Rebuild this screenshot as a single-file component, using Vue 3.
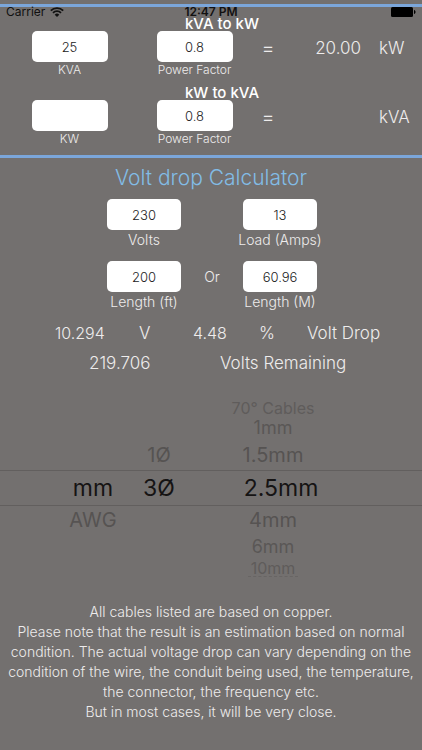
<script setup>

import {computed, ref} from "vue"

const kva = ref("25")
const kvaFactor = ref("0.8")
const kw = ref("")
const kwFactor = ref("0.8")

const volts = ref("230")
const load = ref("13")
const feet = ref("200")
const metres = ref("60.96")

// Rows of the picker wheel, row 4 is the selected one
const units = ref([
    {label: "mm", row: 4},
    {label: "AWG", row: 5},
])
const phases = ref([
    {label: "1Ø", row: 3},
    {label: "3Ø", row: 4},
])
const cables = ref([
    {label: "70° Cables", row: 1},
    {label: "1mm", row: 2},
    {label: "1.5mm", row: 3},
    {label: "2.5mm", row: 4},
    {label: "4mm", row: 5},
    {label: "6mm", row: 6},
    {label: "10mm", row: 7},
])

const millivolts = 12.99 // Drop per amp per metre for 2.5mm three phase

const kwResult = computed(() => kva.value ? (kva.value * kvaFactor.value).toFixed(2) : "")
const kvaResult = computed(() => kw.value ? (kw.value / kwFactor.value).toFixed(2) : "")
const drop = computed(() => load.value * metres.value * millivolts / 1000)
const percent = computed(() => drop.value / volts.value * 100)

const feetChanged = () => {
    metres.value = (feet.value * 0.3048).toFixed(2)
}

const metresChanged = () => {
    feet.value = (metres.value / 0.3048).toFixed(0)
}

</script>

<template>
    <div class="screen">
        <header class="status">
            <span class="carrier">
                Carrier
                <svg class="wifi" viewBox="0 0 14 10" aria-hidden="true">
                    <path d="M.8 3.600a8.800 8.800 0 0 1 12.400 0" />
                    <path d="M3 5.900a5.600 5.600 0 0 1 8 0" />
                    <path class="dot" d="M7 10L4.700 7.700a3.200 3.200 0 0 1 4.600 0z" />
                </svg>
            </span>
            <span class="clock">12:47 PM</span>
            <svg class="battery" viewBox="0 0 25 10" aria-hidden="true">
                <rect x="0" y="0" width="22" height="10" rx="1.500" />
                <path d="M23 3c2 .5 2 3.500 0 4z" />
            </svg>
        </header>

        <section class="power">
            <h2>kVA to kW</h2>
            <div class="powerRow">
                <div class="field">
                    <input id="kva" v-model="kva" inputmode="decimal">
                    <label for="kva">KVA</label>
                </div>
                <div class="field">
                    <input id="kvaFactor" v-model="kvaFactor" inputmode="decimal">
                    <label for="kvaFactor">Power Factor</label>
                </div>
                <span class="equals">=</span>
                <output class="result">{{ kwResult }}</output>
                <span class="unit">kW</span>
            </div>
            <h2>kW to kVA</h2>
            <div class="powerRow">
                <div class="field">
                    <input id="kw" v-model="kw" inputmode="decimal">
                    <label for="kw">KW</label>
                </div>
                <div class="field">
                    <input id="kwFactor" v-model="kwFactor" inputmode="decimal">
                    <label for="kwFactor">Power Factor</label>
                </div>
                <span class="equals">=</span>
                <output class="result">{{ kvaResult }}</output>
                <span class="unit">kVA</span>
            </div>
        </section>

        <section class="volt">
            <h1>Volt drop Calculator</h1>
            <div class="voltRow">
                <div class="field large">
                    <input id="volts" v-model="volts" inputmode="decimal">
                    <label for="volts">Volts</label>
                </div>
                <span></span>
                <div class="field large">
                    <input id="load" v-model="load" inputmode="decimal">
                    <label for="load">Load (Amps)</label>
                </div>
            </div>
            <div class="voltRow">
                <div class="field large">
                    <input id="feet" v-model="feet" inputmode="decimal" @input="feetChanged">
                    <label for="feet">Length (ft)</label>
                </div>
                <span class="or">Or</span>
                <div class="field large">
                    <input id="metres" v-model="metres" inputmode="decimal" @input="metresChanged">
                    <label for="metres">Length (M)</label>
                </div>
            </div>
            <div class="dropRow">
                <output>{{ drop.toFixed(3) }}</output>
                <span>V</span>
                <output>{{ percent.toFixed(2) }}</output>
                <span>%</span>
                <span>Volt Drop</span>
            </div>
            <div class="remainingRow">
                <output>{{ (volts - drop).toFixed(3) }}</output>
                <span>Volts Remaining</span>
            </div>
        </section>

        <section class="picker">
            <div class="band"></div>
            <button v-for="item in units" :key="item.label" type="button" :class="['item', 'unitItem', 'row' + item.row]">{{ item.label }}</button>
            <button v-for="item in phases" :key="item.label" type="button" :class="['item', 'phaseItem', 'row' + item.row]">{{ item.label }}</button>
            <button v-for="item in cables" :key="item.label" type="button" :class="['item', 'cableItem', 'row' + item.row]">{{ item.label }}</button>
            <div class="wheelEdge"></div>
        </section>

        <footer class="note">
            <p>All cables listed are based on copper.</p>
            <p>Please note that the result is an estimation based on normal condition. The actual voltage drop can vary depending on the condition of the wire, the conduit being used, the temperature, the connector, the frequency etc.</p>
            <p>But in most cases, it will be very close.</p>
        </footer>
    </div>
</template>

<style>

body {
    background: #73706f;
}

</style>

<style scoped>

.screen {
    display: flex;
    flex-direction: column;
    min-height: 100vh;
    box-sizing: border-box;
    padding-top: 4px;
    background: #73706f;
    color: #eeecec;
    font-family: Inter, "Liberation Sans", sans-serif;
    font-weight: 300;
}

h1, h2, p {
    margin: 0;
}

.status {
    display: grid;
    grid-template-columns: 1fr auto 1fr;
    align-items: center;
    height: 9px;
    padding: 0 6px;
    border-top: 3px solid #7ba6da;
    color: #111;
    font-size: 12px;
    font-weight: 400;
    line-height: 8px;
}

.carrier {
    display: flex;
    align-items: center;
    gap: 5px;
}

.wifi {
    width: 14px;
    height: 10px;
    fill: none;
    stroke: #111;
    stroke-width: 1.8;
}

.wifi .dot {
    fill: #111;
    stroke: none;
}

.clock {
    font-weight: 600;
}

.battery {
    justify-self: end;
    width: 25px;
    height: 10px;
    fill: #000;
}

.power {
    border-bottom: 3px solid #7ba6da;
    padding-bottom: 8px;
}

.power h2 {
    padding-left: 22px;
    color: #fff;
    font-size: 15px;
    font-weight: 500;
    line-height: 15px;
    text-align: center;
}

.powerRow {
    display: grid;
    grid-template-columns: 139fr 111fr 36fr 75fr 61fr;
}

.powerRow + h2 {
    margin-top: 7px;
}

.field {
    display: flex;
    flex-direction: column;
    align-items: center;
    white-space: nowrap;
}

.field input {
    box-sizing: border-box;
    width: 76px;
    height: 31px;
    padding: 0;
    border: 0;
    border-radius: 5px;
    background: #fff;
    color: #222;
    font: inherit;
    font-size: 13px;
    text-align: center;
}

.field label {
    font-size: 12px;
    line-height: 16px;
}

.field.large input {
    width: 74px;
}

.field.large label {
    font-size: 14px;
    line-height: 20px;
}

.equals, .result, .unit {
    font-size: 17px;
    line-height: 34px;
}

.equals {
    font-size: 20px;
    text-align: center;
}

.result {
    text-align: right;
}

.unit {
    padding-left: 18px;
}

.volt h1 {
    margin-top: 8px;
    color: #82bce6;
    font-size: 21px;
    font-weight: 300;
    line-height: 24px;
    text-align: center;
}

.voltRow {
    display: grid;
    grid-template-columns: 74px 62px 74px;
    justify-content: center;
    margin-top: 9px;
    padding-left: 2px;
}

.voltRow + .voltRow {
    margin-top: 11px;
}

.or {
    font-size: 14px;
    line-height: 32px;
    text-align: center;
}

.dropRow, .remainingRow {
    display: grid;
    font-size: 17px;
    line-height: 20px;
    white-space: nowrap;
}

.dropRow {
    grid-template-columns: 55fr 84fr 54fr 66fr 48fr 115fr;
    margin-top: 11px;
}

.dropRow output {
    font-size: 16px;
}

.remainingRow {
    grid-template-columns: 89fr 131fr 202fr;
    margin-top: 10px;
}

.dropRow output:first-child, .remainingRow output {
    grid-column: 2;
}

.picker {
    display: grid;
    grid-template-columns: 60fr 66fr 66fr 162fr 68fr;
    grid-template-rows: 16px 24px 30px 36px 29px 24px 17px 2px;
    margin-top: 27px;
}

.band {
    grid-column: 1 / -1;
    grid-row: 4;
    border-top: 1px solid #625f5e;
    border-bottom: 1px solid #625f5e;
}

.item {
    overflow: hidden;
    padding: 0;
    border: 0;
    background: none;
    color: #565352;
    font: inherit;
    font-weight: 400;
    white-space: nowrap;
}

.unitItem {
    grid-column: 2;
}

.phaseItem {
    grid-column: 3;
}

.cableItem {
    grid-column: 4;
}

/* Rows fade and shrink as the wheel turns away */
.row1, .row7 {
    color: #5f5c5b;
    font-size: 16px;
    line-height: 16px;
}

.row1 {
    grid-row: 1;
}

.row2, .row6 {
    color: #5a5756;
    font-size: 18px;
    line-height: 24px;
}

.row2 {
    grid-row: 2;
}

.row3, .row5 {
    font-size: 20px;
    line-height: 29px;
}

.row3 {
    grid-row: 3;
}

.row4 {
    grid-row: 4;
    color: #161414;
    font-size: 23px;
    line-height: 36px;
}

.cableItem.row4 {
    padding-left: 16px;
}

.row5 {
    grid-row: 5;
}

.row6 {
    grid-row: 6;
}

.row7 {
    grid-row: 7;
}

.wheelEdge {
    grid-column: 4;
    grid-row: 8;
    justify-self: center;
    width: 50px;
    border-top: 1px dashed #686564;
}

.note {
    margin-top: 24px;
    padding: 0 4px;
    font-size: 14px;
    line-height: 20px;
    text-align: center;
}

</style>
